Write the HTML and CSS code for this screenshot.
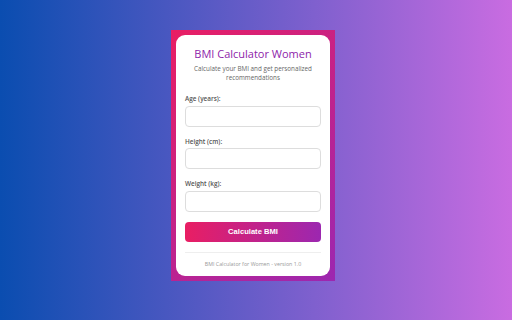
FILE: index.html
```html
<!DOCTYPE html>
<html lang="en">
<head>
    <meta charset="UTF-8">
    <meta name="viewport" content="width=device-width, initial-scale=1.0">
    <title>BMI Calculator Women</title>
    <link rel="stylesheet" href="styles.css">
</head>
<body>
    <div class="popup">
        <div class="card">
            <h1 class="title">BMI Calculator Women</h1>
            <p class="subtitle">Calculate your BMI and get personalized recommendations</p>

            <div class="group">
                <label for="age">Age (years):</label>
                <input type="number" id="age">
            </div>
            <div class="group">
                <label for="height">Height (cm):</label>
                <input type="number" id="height">
            </div>
            <div class="group">
                <label for="weight">Weight (kg):</label>
                <input type="number" id="weight">
            </div>

            <button class="calc-btn">Calculate BMI</button>

            <p class="footer">BMI Calculator for Women - version 1.0</p>
        </div>
    </div>
</body>
</html>
```

FILE: styles.css
```css
body{
    margin: 0;
    height: 320px;
    display: flex;
    justify-content: center;
    align-items: flex-start;
    background: linear-gradient(90deg, #0a4db0, #c96ce1);
    font-family: 'Open Sans', 'Noto Sans', sans-serif;
}
.popup{
    width: 164px;
    box-sizing: border-box;
    margin-top: 30px;
    margin-right: 6px;
    padding: 5px;
    background: linear-gradient(135deg, #e91e63, #9c27b0);
}
.card{
    background-color: #fff;
    border-radius: 9px;
    padding: 12px 9px 8px 9px;
    text-align: center;
}
.title{
    margin: 0;
    font-size: 11px;
    line-height: 14px;
    font-weight: 500;
    color: #8e24aa;
}
.subtitle{
    margin: 3px 2px 12px;
    font-size: 6.3px;
    line-height: 9px;
    color: #666;
}
.group{
    text-align: left;
    margin-bottom: 10px;
}
.group label{
    display: block;
    font-size: 6.4px;
    line-height: 9px;
    font-weight: 600;
    color: #555;
    margin-bottom: 2.5px;
}
.group input{
    display: block;
    width: 100%;
    height: 21px;
    box-sizing: border-box;
    border: 1px solid #ddd;
    border-radius: 4px;
    padding: 0 5px;
    margin: 0;
    outline: none;
}
.calc-btn{
    display: block;
    width: 100%;
    height: 20px;
    border: none;
    border-radius: 4px;
    background: linear-gradient(90deg, #e91e63, #9c27b0);
    color: #fff;
    font-family: 'Liberation Sans', Arial, sans-serif;
    font-weight: bold;
    font-size: 7.6px;
    cursor: pointer;
}
.footer{
    margin: 10px 0 0;
    padding-top: 8px;
    border-top: 1px solid #eee;
    font-size: 5.3px;
    line-height: 7px;
    color: #999;
}
```
